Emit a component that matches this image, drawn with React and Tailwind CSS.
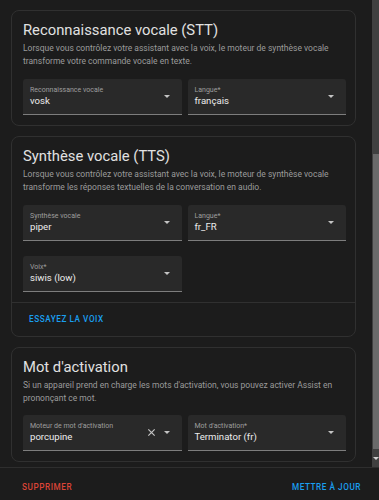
import React from 'react'

const font = { fontFamily: 'Roboto, "Noto Sans", sans-serif' }

function Arrow(){
  return <div className="h-0 w-0 border-x-[3.5px] border-t-[3.5px] border-x-transparent border-t-[#c4c4c4]" />
}

function Field({ label, value, clear }){
  return (
    <div className="flex h-[36px] items-center rounded-t-[3px] border-b border-[#7d7d7d] bg-[#292929] pl-[7px] pr-[12px]">
      <div className="min-w-0 flex-1">
        <div className="text-[7px] leading-[8px] text-[#9e9e9e]">{label}</div>
        <div className="mt-[1px] text-[9.6px] leading-[12px] text-[#ececec]">{value}</div>
      </div>
      {clear && (
        <svg width="9" height="9" viewBox="0 0 10 10" className="mr-[8px]">
          <path d="M1.5 1.5 L8.5 8.5 M8.5 1.5 L1.5 8.5" stroke="#c4c4c4" strokeWidth="1.3" />
        </svg>
      )}
      <Arrow />
    </div>
  )
}

function Card({ title, desc, children, footer }){
  return (
    <div className="rounded-[8px] border border-[#303030] bg-[#1c1c1c]">
      <div className="pl-[11px] pr-[9px] pt-[9px] pb-[10px]">
        <h2 className="text-[14.8px] leading-[20px] text-[#e1e1e1]">{title}</h2>
        <p className="mt-[2px] text-[8.5px] leading-[13.4px] text-[#9b9b9b]">{desc}</p>
        {children}
      </div>
      {footer}
    </div>
  )
}

export default function App(){
  return (
    <div style={font} className="flex h-[500px] w-[379px] flex-col overflow-hidden bg-[#1c1c1c]">
      <div className="flex h-[467px]">
        <div className="flex w-[372px] flex-col gap-[10px] pl-[11px] pr-[16px] pt-[10px]">
          <Card
            title="Reconnaissance vocale (STT)"
            desc="Lorsque vous contrôlez votre assistant avec la voix, le moteur de synthèse vocale transforme votre commande vocale en texte."
          >
            <div className="mt-[10px] grid grid-cols-2 gap-[6px]">
              <Field label="Reconnaissance vocale" value="vosk" />
              <Field label="Langue*" value="français" />
            </div>
          </Card>

          <Card
            title="Synthèse vocale (TTS)"
            desc="Lorsque vous contrôlez votre assistant avec la voix, le moteur de synthèse vocale transforme les réponses textuelles de la conversation en audio."
            footer={
              <div className="flex h-[34px] items-center border-t border-[#303030] pl-[17px] pt-[1px]">
                <span className="text-[8.2px] font-medium uppercase tracking-[0.55px] text-[#1a9ff0]">Essayez la voix</span>
              </div>
            }
          >
            <div className="mt-[10px] grid grid-cols-2 gap-[6px]">
              <Field label="Synthèse vocale" value="piper" />
              <Field label="Langue*" value="fr_FR" />
            </div>
            <div className="mt-[15px] grid grid-cols-2 gap-[6px]">
              <Field label="Voix*" value="siwis (low)" />
            </div>
          </Card>

          <Card
            title="Mot d'activation"
            desc="Si un appareil prend en charge les mots d'activation, vous pouvez activer Assist en prononçant ce mot."
          >
            <div className="mt-[10px] grid grid-cols-2 gap-[6px]">
              <Field label="Moteur de mot d'activation" value="porcupine" clear />
              <Field label="Mot d'activation*" value="Terminator (fr)" />
            </div>
          </Card>
        </div>

        <div className="flex w-[7px] flex-col bg-[#404040]">
          <div className="h-[154px]" />
          <div className="ml-[1px] h-[295px] bg-[#6a6a6a]" />
          <div className="flex flex-1 items-center justify-center">
            <div className="h-0 w-0 border-x-[3px] border-t-[3px] border-x-transparent border-t-[#d0d0d0]" />
          </div>
        </div>
      </div>

      <div className="flex flex-1 items-center justify-between border-t border-[#2e2e2e] pl-[22px] pr-[18px] pt-[6px]">
        <span className="text-[8.2px] font-medium uppercase tracking-[0.55px] text-[#db4437]">Supprimer</span>
        <span className="text-[8.2px] font-medium uppercase tracking-[0.55px] text-[#1a9ff0]">Mettre à jour</span>
      </div>
    </div>
  )
}
